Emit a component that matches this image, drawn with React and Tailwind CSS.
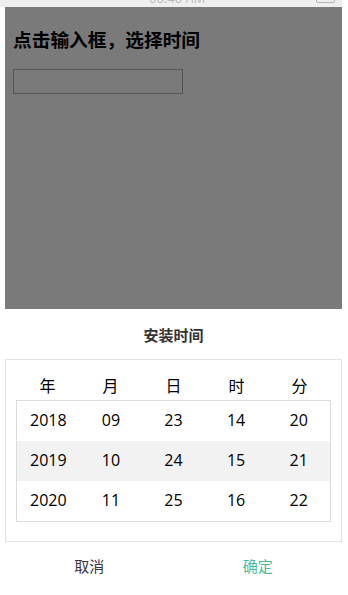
import React from 'react'

const font = { fontFamily: '"Open Sans", "Noto Sans CJK SC", sans-serif' }

const headers = ['年', '月', '日', '时', '分']
const rows = [
  ['2018', '09', '23', '14', '20'],
  ['2019', '10', '24', '15', '21'],
  ['2020', '11', '25', '16', '22']
]

const App = () => {
  return (
    <div className="w-[348px] h-[595px] bg-white flex flex-col overflow-hidden" style={font}>
      {/* status bar, mostly cut off at the top */}
      <div className="w-[342px] h-[7px] bg-[#efefef] overflow-hidden shrink-0">
        <div className="flex items-end justify-between h-[20px] -mt-[15px] px-[9px] text-[#bdbdbd]">
          <span className="text-[13px] leading-none tracking-[1px]">•••••</span>
          <span className="text-[13px] leading-none">00:40 AM</span>
          <span className="w-[19px] h-[10px] border border-[#b5b5b5] rounded-[2px] mr-[-2px] mb-[2px]"></span>
        </div>
      </div>

      <div className="ml-[5px] w-[337px] flex-1 flex flex-col">
        {/* page under the mask */}
        <div className="h-[302px] bg-[#7a7a7a] px-2 pt-[20px] shrink-0">
          <h3 className="text-[18.72px] leading-[26px] font-bold text-black">点击输入框，选择时间</h3>
          <div className="mt-[16px] w-[170px] h-[25px] border border-[#555]"></div>
        </div>

        {/* bottom sheet */}
        <div className="flex-1 bg-white rounded-t-[2px] flex flex-col">
          <div className="pt-[16px] text-center text-[15px] leading-[21px] font-bold text-[#333]">安装时间</div>

          <div className="mt-[13px] border border-[#e3e3e3] px-[10px] pt-[14px] pb-[19px]">
            <div className="grid grid-cols-5 h-6 mb-[2px] text-[16px] leading-6 text-black text-center">
              {headers.map(h => (
                <span key={h}>{h}</span>
              ))}
            </div>
            <div className="border border-[#dcdcdc]">
              {rows.map((row, i) => (
                <div
                  key={i}
                  className={`grid grid-cols-5 h-10 items-center text-center text-[16px] leading-5 pb-[2px] text-black ${i === 1 ? 'bg-[#f2f2f2]' : ''}`}
                >
                  {row.map((v, j) => (
                    <span key={j}>{v}</span>
                  ))}
                </div>
              ))}
            </div>
          </div>

          <div className="grid grid-cols-2 h-[48px] items-center text-center text-[15px]">
            <span className="text-[#3a3340]">取消</span>
            <span className="text-[#4dba9a]">确定</span>
          </div>
        </div>
      </div>
    </div>
  )
}

export default App
